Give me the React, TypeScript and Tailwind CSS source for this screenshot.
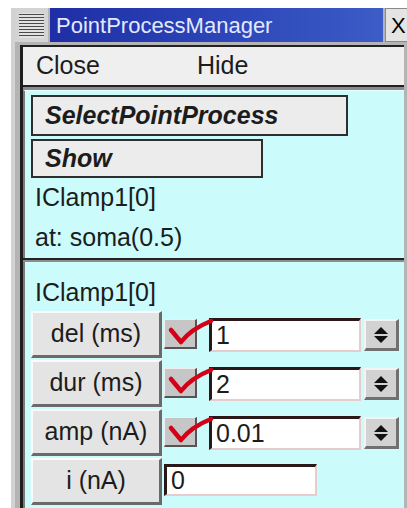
import React from 'react';

// Parameter rows shown under the selected point process
const params = [
  { label: 'del (ms)', value: '1', checked: true, spinner: true },
  { label: 'dur (ms)', value: '2', checked: true, spinner: true },
  { label: 'amp (nA)', value: '0.01', checked: true, spinner: true },
  { label: 'i (nA)', value: '0', checked: false, spinner: false },
];

function CheckMark() {
  return (
    <svg className="absolute left-0 top-0 w-[50px] h-[28px] overflow-visible pointer-events-none" viewBox="0 0 50 28">
      <path d="M6 10 L16 22 Q26 9 46 1" fill="none" stroke="#d40018" strokeWidth="4.5" strokeLinecap="round" strokeLinejoin="round" />
    </svg>
  );
}

function Spinner() {
  return (
    <div className="ml-[3px] mt-[8px] w-[35px] h-[32px] bg-[#d2d2d2] border-t-2 border-l-2 border-[#f4f4f4] border-b-[3px] border-r-[3px] border-b-[#707070] border-r-[#707070] flex flex-col items-center justify-center gap-[2px]">
      <svg width="14" height="7" viewBox="0 0 14 7"><path d="M0 7 L7 0 L14 7 Z" fill="#111" /></svg>
      <svg width="14" height="7" viewBox="0 0 14 7"><path d="M0 0 L14 0 L7 7 Z" fill="#111" /></svg>
    </div>
  );
}

export default function App() {
  return (
    <div className="w-[407px] h-[508px] overflow-hidden bg-white font-['Liberation_Sans',Arial,sans-serif] text-[#1c1c1c]">
      <div className="ml-[11px] mt-2 w-[400px] h-[500px] bg-[#b4b4b4] border-l-4 border-[#d2d2d2] flex flex-col">
        {/* Title bar */}
        <div className="flex h-[34px] gap-[2px] shrink-0">
          <div className="w-[33px] bg-[#d4d4d4] flex items-center justify-center">
            <div className="w-[25px] h-[25px] flex flex-col justify-between py-[1px] bg-[#e2e2e2]">
              {Array.from({ length: 8 }).map((_, i) => (
                <div key={i} className="h-[1px] bg-[#4a4a4a]" />
              ))}
            </div>
          </div>
          <div className="w-[333px] bg-gradient-to-r from-[#1f2ea6] via-[#2c44b8] to-[#3c5cc6] text-[#e2e9ff] text-[22px] pl-[6px] flex items-center">
            PointProcessManager
          </div>
          <div className="flex-1 bg-[#e4e4e4] border border-[#8a8a8a] text-[22px] text-black pl-[5px] flex items-center">
            X
          </div>
        </div>

        {/* Client area */}
        <div className="mt-[3px] ml-[5px] w-[384px] flex-1 border-l-[3px] border-[#1e1e1e] flex flex-col">
          {/* Menu bar */}
          <div className="h-[40px] shrink-0 bg-[#efefef] border-t-2 border-[#222] flex items-center text-[25px]">
            <span className="ml-[13px]">Close</span>
            <span className="ml-[97px]">Hide</span>
          </div>
          <div className="h-[2px] bg-[#222] shrink-0" />
          <div className="h-[3px] bg-[#8c8c8c] shrink-0" />

          {/* Selection panel */}
          <div className="h-[168px] shrink-0 bg-[#cbfbfb] border-l-2 border-[#7a7a7a] border-t border-t-[#e8ffff] pl-[6px] pt-[4px] text-[25px]">
            <div className="w-[317px] h-[41px] bg-[#ececec] border-2 border-[#2e2e2e] pl-[12px] flex items-center italic font-bold">
              SelectPointProcess
            </div>
            <div className="mt-[3px] w-[232px] h-[39px] bg-[#ececec] border-2 border-[#2e2e2e] pl-[12px] flex items-center italic font-bold">
              Show
            </div>
            <div className="h-[40px] pl-[4px] flex items-center">IClamp1[0]</div>
            <div className="h-[40px] pl-[4px] flex items-center">at: soma(0.5)</div>
          </div>
          <div className="h-[2px] bg-[#222] shrink-0" />
          <div className="h-[2px] bg-[#8c8c8c] shrink-0" />

          {/* Parameter panel */}
          <div className="flex-1 bg-[#cbfbfb] border-l-2 border-[#7a7a7a] pl-[6px] pt-[14px] text-[25px]">
            <div className="h-[34px] pl-[4px] flex items-center">IClamp1[0]</div>
            <div className="mt-[1px] flex flex-col gap-[1px]">
              {params.map((p) => (
                <div key={p.label} className="h-[48px] flex items-start">
                  <div className="w-[131px] h-[47px] bg-[#e4e4e4] border-t-2 border-l-2 border-[#fafafa] border-b-[3px] border-r-[3px] border-b-[#6a6a6a] border-r-[#6a6a6a] flex items-center justify-center">
                    {p.label}
                  </div>
                  {p.checked && (
                    <div className="relative ml-[2px] mt-[8px] w-[33px] h-[30px] bg-[#c6c6c6] border-t border-l border-[#efefef] border-b-2 border-r-2 border-b-[#555] border-r-[#555]">
                      <CheckMark />
                    </div>
                  )}
                  <div
                    className={
                      p.checked
                        ? 'ml-[12px] mt-[7px] w-[152px] h-[34px] bg-white border-t-[3px] border-l-[3px] border-[#2a1818] border-b-2 border-r-2 border-b-[#e6cccc] border-r-[#e6cccc] pl-[4px] flex items-center'
                        : 'ml-[2px] mt-[6px] w-[153px] h-[32px] bg-white border-t-[3px] border-l-[3px] border-[#2a1818] border-b-2 border-r-2 border-b-[#e6cccc] border-r-[#e6cccc] pl-[4px] flex items-center'
                    }
                  >
                    {p.value}
                  </div>
                  {p.spinner && <Spinner />}
                </div>
              ))}
            </div>
          </div>
        </div>
      </div>
    </div>
  );
}
